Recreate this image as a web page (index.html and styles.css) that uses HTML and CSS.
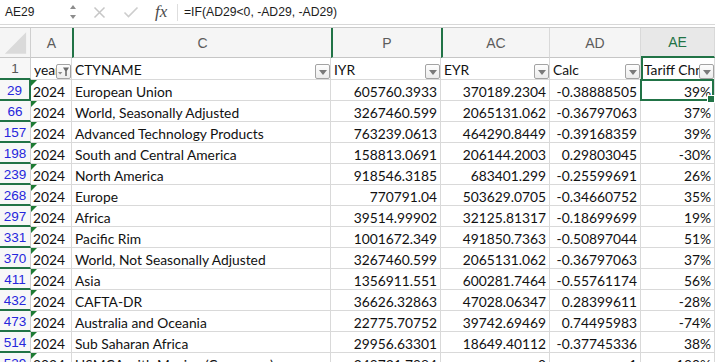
FILE: index.html
```html
<!DOCTYPE html>
<html lang="en">
<head>
    <meta charset="UTF-8">
    <meta name="viewport" content="width=device-width, initial-scale=1.0">
    <title>Tariff sheet</title>
    <link rel="stylesheet" href="styles.css">
</head>
<body>
    <div class="formula-bar">
        <div class="name-box">
            <span>AE29</span>
            <svg class="stepper" width="8" height="16" viewBox="0 0 8 16"><path d="M1 5 L4 1 L7 5 Z M1 11 L4 15 L7 11 Z" fill="#8c8c8c"/></svg>
        </div>
        <svg class="ico-x" width="13" height="13" viewBox="0 0 13 13"><path d="M1.5 1.5 L11.5 11.5 M11.5 1.5 L1.5 11.5" stroke="#c6c6c6" stroke-width="1.5" fill="none"/></svg>
        <svg class="ico-ok" width="16" height="12" viewBox="0 0 16 12"><path d="M1.5 6.5 L5.5 10.5 L14.5 1.5" stroke="#cdcdcd" stroke-width="1.6" fill="none"/></svg>
        <span class="fx">fx</span>
        <div class="formula">=IF(AD29&lt;0, -AD29, -AD29)</div>
    </div>

    <div class="sheet">
        <!-- column headers -->
        <div class="c ch corner"><svg width="31" height="29" viewBox="0 0 31 29"><path d="M5 26 L27 4 L27 26 Z" fill="#dadada"/></svg></div>
        <div class="c ch nb">A</div>
        <div class="c ch hid nb">C</div>
        <div class="c ch hid nb">P</div>
        <div class="c ch hid">AC</div>
        <div class="c ch">AD</div>
        <div class="c ch sel">AE</div>

        <!-- row 1 -->
        <div class="c rh plain">1</div>
        <div class="c hd"><span class="t">year</span><span class="fbtn on"><svg width="13" height="13" viewBox="0 0 13 13"><path d="M1 7 L5.4 7 L3.2 9.6 Z" fill="#8a8a8a"/><path d="M6 2.5 L12 2.5 L9.8 6 L9.8 11 L8.2 11 L8.2 6 Z" fill="#6b6b6b"/></svg></span></div>
        <div class="c hd"><span class="t">CTYNAME</span><span class="fbtn"></span></div>
        <div class="c hd"><span class="t">IYR</span><span class="fbtn"></span></div>
        <div class="c hd"><span class="t">EYR</span><span class="fbtn"></span></div>
        <div class="c hd"><span class="t">Calc</span><span class="fbtn"></span></div>
        <div class="c hd sel-left"><span class="t">Tariff Chng</span><span class="fbtn"></span></div>

        <div class="c rh cur">29</div>
        <div class="c tx">2024</div>
        <div class="c">European Union</div>
        <div class="c num">605760.3933</div>
        <div class="c num">370189.2304</div>
        <div class="c num">-0.38888505</div>
        <div class="c num active">39%</div>

        <div class="c rh">66</div>
        <div class="c tx">2024</div>
        <div class="c">World, Seasonally Adjusted</div>
        <div class="c num">3267460.599</div>
        <div class="c num">2065131.062</div>
        <div class="c num">-0.36797063</div>
        <div class="c num">37%</div>

        <div class="c rh">157</div>
        <div class="c tx">2024</div>
        <div class="c">Advanced Technology Products</div>
        <div class="c num">763239.0613</div>
        <div class="c num">464290.8449</div>
        <div class="c num">-0.39168359</div>
        <div class="c num">39%</div>

        <div class="c rh">198</div>
        <div class="c tx">2024</div>
        <div class="c">South and Central America</div>
        <div class="c num">158813.0691</div>
        <div class="c num">206144.2003</div>
        <div class="c num">0.29803045</div>
        <div class="c num">-30%</div>

        <div class="c rh">239</div>
        <div class="c tx">2024</div>
        <div class="c">North America</div>
        <div class="c num">918546.3185</div>
        <div class="c num">683401.299</div>
        <div class="c num">-0.25599691</div>
        <div class="c num">26%</div>

        <div class="c rh">268</div>
        <div class="c tx">2024</div>
        <div class="c">Europe</div>
        <div class="c num">770791.04</div>
        <div class="c num">503629.0705</div>
        <div class="c num">-0.34660752</div>
        <div class="c num">35%</div>

        <div class="c rh">297</div>
        <div class="c tx">2024</div>
        <div class="c">Africa</div>
        <div class="c num">39514.99902</div>
        <div class="c num">32125.81317</div>
        <div class="c num">-0.18699699</div>
        <div class="c num">19%</div>

        <div class="c rh">331</div>
        <div class="c tx">2024</div>
        <div class="c">Pacific Rim</div>
        <div class="c num">1001672.349</div>
        <div class="c num">491850.7363</div>
        <div class="c num">-0.50897044</div>
        <div class="c num">51%</div>

        <div class="c rh">370</div>
        <div class="c tx">2024</div>
        <div class="c">World, Not Seasonally Adjusted</div>
        <div class="c num">3267460.599</div>
        <div class="c num">2065131.062</div>
        <div class="c num">-0.36797063</div>
        <div class="c num">37%</div>

        <div class="c rh">411</div>
        <div class="c tx">2024</div>
        <div class="c">Asia</div>
        <div class="c num">1356911.551</div>
        <div class="c num">600281.7464</div>
        <div class="c num">-0.55761174</div>
        <div class="c num">56%</div>

        <div class="c rh">432</div>
        <div class="c tx">2024</div>
        <div class="c">CAFTA-DR</div>
        <div class="c num">36626.32863</div>
        <div class="c num">47028.06347</div>
        <div class="c num">0.28399611</div>
        <div class="c num">-28%</div>

        <div class="c rh">473</div>
        <div class="c tx">2024</div>
        <div class="c">Australia and Oceania</div>
        <div class="c num">22775.70752</div>
        <div class="c num">39742.69469</div>
        <div class="c num">0.74495983</div>
        <div class="c num">-74%</div>

        <div class="c rh">514</div>
        <div class="c tx">2024</div>
        <div class="c">Sub Saharan Africa</div>
        <div class="c num">29956.63301</div>
        <div class="c num">18649.40112</div>
        <div class="c num">-0.37745336</div>
        <div class="c num">38%</div>

        <div class="c rh">539</div>
        <div class="c tx">2024</div>
        <div class="c">USMCA with Mexico (Consumer)</div>
        <div class="c num">249731.7984</div>
        <div class="c num">0</div>
        <div class="c num">1</div>
        <div class="c num">100%</div>
    </div>
</body>
</html>
```

FILE: styles.css
```css
/* spreadsheet window: formula bar + filtered grid */
* {
    box-sizing: border-box;
}

body {
    margin: 0;
    width: 715px;
    height: 362px;
    overflow: hidden;
    background-color: #fff;
    font-family: Lato, "Liberation Sans", sans-serif;
}

.formula-bar {
    display: flex;
    align-items: center;
    height: 25px;
    border-bottom: 1px solid #d8d8d8;
    font-family: "Liberation Sans", Arial, sans-serif;
    color: #1c1c1c;
}

.name-box {
    display: flex;
    align-items: center;
    width: 88px;
    height: 100%;
    padding: 0 11px 0 5px;
    font-size: 12px;
}

.name-box span {
    flex: 1;
}

.ico-x {
    margin-left: 5px;
}

.ico-ok {
    margin-left: 17px;
}

.fx {
    width: 14px;
    margin-left: 16px;
    font-family: "Liberation Serif", serif;
    font-style: italic;
    font-size: 17px;
    color: #4a4a4a;
}

.formula {
    flex: 1;
    margin-left: 8px;
    padding-left: 6px;
    border-left: 1px solid #dedede;
    font-size: 12.2px;
    line-height: 17px;
}

.sheet {
    display: grid;
    grid-template-columns: 31px 41px 259px 110px 109px 91px 74px;
    grid-template-rows: 30px 22px;
    grid-auto-rows: 21px;
    margin-top: 2px;
    border-top: 1px solid #cbcbcb;
}

.c {
    display: flex;
    align-items: center;
    padding: 2px 3px 0;
    border-right: 1px solid #d9d9d9;
    border-bottom: 1px solid #d9d9d9;
    font-size: 13.8px;
    color: #111;
    white-space: nowrap;
    overflow: hidden;
}

.num {
    justify-content: flex-end;
}

/* column headers */
.ch {
    justify-content: center;
    padding: 0;
    background-color: #f5f5f5;
    border-bottom: 1px solid #c6c6c6;
    font-family: "Liberation Sans", Arial, sans-serif;
    font-size: 14px;
    color: #5c5c5c;
}

.ch.nb {
    border-right: none;
}

.ch.hid {
    border-left: 2px solid #217346;
}

.ch.sel {
    background-color: #e8e8e8;
    border-bottom: 2px solid #217346;
    color: #217346;
}

.corner {
    align-items: flex-end;
    justify-content: flex-start;
    border-right: 1px solid #cfcfcf;
}

/* row headers */
.rh {
    justify-content: center;
    padding: 1px 0 0;
    background-color: #f7f7f7;
    border-right: 1px solid #cfcfcf;
    border-bottom: 2px solid #217346;
    font-family: "Liberation Sans", Arial, sans-serif;
    font-size: 13.5px;
    color: #2626dc;
}

.rh.plain {
    color: #555;
}

.rh.cur {
    border-right: 2px solid #217346;
}

/* header row with filter buttons */
.hd {
    padding: 2px 0 0 3px;
}

.hd .t {
    flex: 1;
    overflow: hidden;
}

.fbtn {
    flex: none;
    display: flex;
    align-items: center;
    justify-content: center;
    align-self: flex-end;
    width: 15px;
    height: 15px;
    border: 1px solid #a3a3a3;
    border-radius: 2px;
    background: linear-gradient(#fdfdfd, #ececec);
}

.fbtn::after {
    content: '';
    margin-top: 1px;
    border-left: 4px solid transparent;
    border-right: 4px solid transparent;
    border-top: 5px solid #7a7a7a;
}

.fbtn.on::after {
    display: none;
}

.sel-left {
    border-left: 2px solid #217346;
    padding-left: 1px;
}

/* number stored as text marker */
.tx {
    position: relative;
    padding-left: 2px;
}

.tx::before {
    content: '';
    position: absolute;
    left: 0;
    top: 0;
    border-top: 6px solid #1e7b34;
    border-right: 6px solid transparent;
}

/* active cell */
.active {
    position: relative;
    overflow: visible;
}

.active::after {
    content: '';
    position: absolute;
    top: -1px;
    left: -1px;
    right: 0;
    bottom: -1px;
    border: 2px solid #217346;
}

.active::before {
    content: '';
    position: absolute;
    right: -1px;
    bottom: -3px;
    width: 6px;
    height: 6px;
    background-color: #217346;
    border: 1px solid #fff;
    z-index: 1;
}
```
